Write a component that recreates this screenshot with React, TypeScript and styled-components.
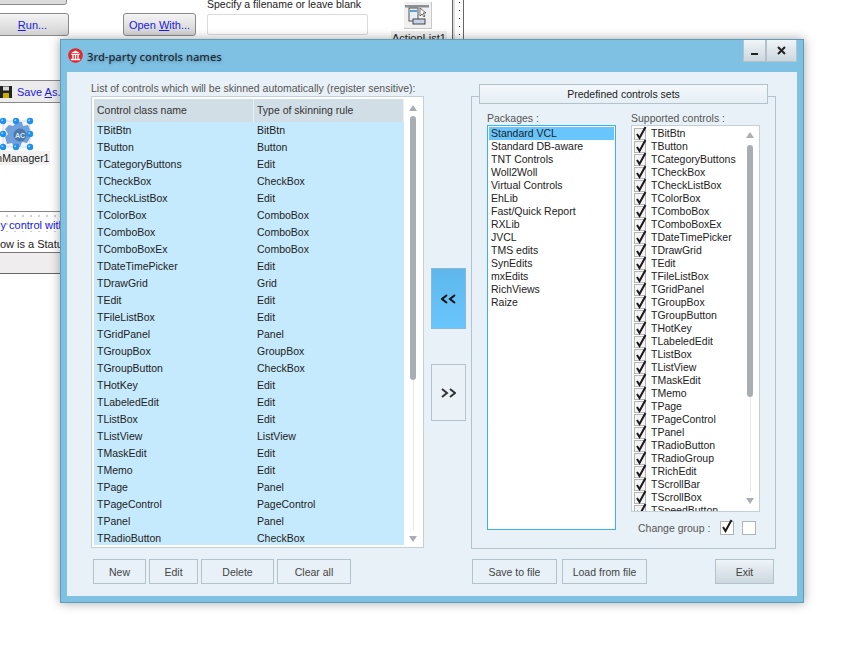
import React from 'react';
import styled, { createGlobalStyle } from 'styled-components';

const GlobalStyle = createGlobalStyle`
  html, body {
    margin: 0;
    padding: 0;
    background: #fff;
  }
  body {
    font-family: 'Liberation Sans', Arial, sans-serif;
    font-size: 10.5px;
    color: #222;
  }
`;

const Desktop = styled.div`
  position: relative;
  width: 858px;
  height: 646px;
  overflow: hidden;
  background: #fff;
`;

/* things left of / behind the dialog, on the form designer canvas */
const DesignerButton = styled.div<{ $left: number; $width: number }>`
  position: absolute;
  left: ${(p) => p.$left}px;
  top: 13px;
  width: ${(p) => p.$width}px;
  height: 23px;
  box-sizing: border-box;
  display: flex;
  align-items: center;
  justify-content: center;
  border: 1px solid #8a8a8a;
  border-radius: 3px;
  background: linear-gradient(#f4f4f4, #d2d2d2);
  color: #1a1ae0;
  font-size: 11px;
`;

const TopStub = styled.div`
  position: absolute;
  left: -4px;
  top: -10px;
  width: 71px;
  height: 15px;
  box-sizing: border-box;
  border: 1px solid #8a8a8a;
  border-radius: 3px;
  background: #dcdcdc;
`;

const FilenameLabel = styled.div`
  position: absolute;
  left: 207px;
  top: -3px;
  font-size: 10.5px;
  line-height: 15px;
  color: #222;
`;

const FilenameInput = styled.div`
  position: absolute;
  left: 207px;
  top: 14px;
  width: 161px;
  height: 21px;
  box-sizing: border-box;
  border: 1px solid #dadada;
  border-radius: 2px;
`;

const ActionIcon = styled.div`
  position: absolute;
  left: 404px;
  top: 2px;
  width: 28px;
  height: 27px;
  box-sizing: border-box;
  border-right: 1px solid #c8c8c8;
  border-bottom: 1px solid #c8c8c8;
  background: #f0f0f0;
`;

const ActionLabel = styled.div`
  position: absolute;
  left: 391px;
  top: 31px;
  padding: 0 1px;
  background: #eee;
  font-size: 11px;
  line-height: 15px;
`;

const VerticalRule = styled.div<{ $left: number; $width: number }>`
  position: absolute;
  left: ${(p) => p.$left}px;
  top: 0;
  width: ${(p) => p.$width}px;
  height: 40px;
  box-sizing: border-box;
  border-left: 1px solid #666;
  background: #ddd;
`;

const DotColumn = styled.div`
  position: absolute;
  left: 459px;
  top: 2px;
  width: 1px;
  height: 34px;
  background: repeating-linear-gradient(#222 0 1px, transparent 1px 8px);
`;

const SaveBar = styled.div`
  position: absolute;
  left: 0;
  top: 80px;
  width: 62px;
  height: 23px;
  box-sizing: border-box;
  display: flex;
  align-items: center;
  gap: 4px;
  border-top: 1px solid #888;
  border-bottom: 1px solid #888;
  background: #ececec;
  color: #1a1ae0;
  font-size: 11px;
  white-space: nowrap;
  overflow: hidden;
`;

const ManagerIcon = styled.div`
  position: absolute;
  left: 0;
  top: 117px;
  width: 35px;
  height: 35px;
`;

const ManagerLabel = styled.div`
  position: absolute;
  left: -27px;
  top: 151px;
  padding-right: 1px;
  background: #f2f2f2;
  font-size: 10.5px;
  line-height: 14px;
`;

const StatusStrip = styled.div`
  position: absolute;
  left: 0;
  top: 211px;
  width: 62px;
  height: 63px;
  box-sizing: border-box;
  border-top: 1px solid #888;
  border-bottom: 1px solid #666;
  background: #efeded;
  overflow: hidden;
  white-space: nowrap;
`;

const StatusLink = styled.div`
  height: 20px;
  margin-left: -13px;
  background-color: #fff;
  background-image: radial-gradient(#999 0.6px, transparent 0.8px);
  background-size: 8px 8px;
  color: #1a1ae0;
  font-size: 11px;
  line-height: 26px;
`;

const StatusText = styled.div`
  height: 20px;
  margin-left: -16px;
  border-bottom: 1px solid #777;
  background: #fff;
  font-size: 11px;
  line-height: 24px;
`;

/* the dialog */
const Dialog = styled.div`
  position: absolute;
  left: 60px;
  top: 39px;
  width: 744px;
  height: 564px;
  box-sizing: border-box;
  display: flex;
  flex-direction: column;
  padding: 0 6px 6px;
  border: 1px solid #5f9cba;
  background: #7fc1e3;
  box-shadow: 0 0 10px rgba(0, 0, 0, 0.35);
`;

const TitleBar = styled.div`
  height: 32px;
  flex: none;
  display: flex;
  align-items: flex-start;
  gap: 4px;
`;

const TitleIcon = styled.svg`
  margin-top: 8px;
  margin-left: 1px;
  width: 15px;
  height: 15px;
`;

const TitleText = styled.div`
  margin-top: 8px;
  font-family: 'Noto Sans', sans-serif;
  font-size: 11.2px;
  line-height: 17px;
  font-weight: 500;
  color: #1f2d38;
  text-shadow: 0 1px 3px rgba(40, 70, 90, 0.45);
`;

const WindowButtons = styled.div`
  margin-left: auto;
  display: flex;
`;

const WindowButton = styled.div<{ $width: number }>`
  width: ${(p) => p.$width}px;
  height: 22px;
  box-sizing: border-box;
  display: flex;
  align-items: center;
  justify-content: center;
  border: 1px solid #b3c3cc;
  border-top: none;
  background: linear-gradient(#f0f5f8, #ccd7de);
`;

const Client = styled.div`
  flex: 1;
  display: flex;
  padding: 10px 0 0 24px;
  background: #e8f1f7;
`;

const LeftColumn = styled.div`
  width: 333px;
  display: flex;
  flex-direction: column;
`;

const Caption = styled.div`
  height: 14px;
  font-size: 10.5px;
  line-height: 13px;
  color: #555;
  white-space: nowrap;
`;

const GridBox = styled.div`
  height: 452px;
  box-sizing: border-box;
  display: flex;
  padding: 2px 0 2px 2px;
  border: 1px solid #c3d0d8;
  background: #fff;
`;

const GridBody = styled.div`
  width: 310px;
  overflow: hidden;
  background: #c6eafd;
`;

const GridRow = styled.div`
  display: grid;
  grid-template-columns: 160px 150px;
  height: 17px;
  align-items: center;
  font-size: 10.5px;
  line-height: 17px;
  white-space: nowrap;
  color: #222;
`;

const GridCell = styled.div`
  padding-left: 3px;
`;

const GridHeader = styled.div`
  display: grid;
  grid-template-columns: 160px 150px;
  height: 23px;
  background: #d1dee6;
  font-size: 10.5px;
  line-height: 23px;
  color: #333;
`;

const HeaderCell = styled.div`
  padding-left: 3px;
  border-right: 1px solid #e8f1f7;
`;

const GridScroll = styled.div`
  flex: 1;
  position: relative;
`;

const ArrowUp = styled.div<{ $top: number; $left: number }>`
  position: absolute;
  top: ${(p) => p.$top}px;
  left: ${(p) => p.$left}px;
  border-left: 4px solid transparent;
  border-right: 4px solid transparent;
  border-bottom: 6px solid #a8afb3;
`;

const ArrowDown = styled.div<{ $top: number; $left: number }>`
  position: absolute;
  top: ${(p) => p.$top}px;
  left: ${(p) => p.$left}px;
  border-left: 4px solid transparent;
  border-right: 4px solid transparent;
  border-top: 6px solid #a8afb3;
`;

const Thumb = styled.div<{ $top: number; $left: number; $height: number }>`
  position: absolute;
  top: ${(p) => p.$top}px;
  left: ${(p) => p.$left}px;
  width: 6px;
  height: ${(p) => p.$height}px;
  border-radius: 3px;
  background: #a8afb3;
`;

const Track = styled.div<{ $top: number; $left: number; $height: number }>`
  position: absolute;
  top: ${(p) => p.$top}px;
  left: ${(p) => p.$left}px;
  width: 1px;
  height: ${(p) => p.$height}px;
  background: #e4e8ea;
`;

const ButtonRow = styled.div`
  display: flex;
  gap: 3px;
  margin-top: 11px;
  padding-left: 2px;
`;

const FlatButton = styled.div<{ $width: number; $raised?: boolean }>`
  width: ${(p) => p.$width}px;
  height: 25px;
  box-sizing: border-box;
  display: flex;
  align-items: center;
  justify-content: center;
  border: 1px solid #b3c3cc;
  background: ${(p) => (p.$raised ? 'linear-gradient(#eef4f8, #ccd7df)' : '#e8f1f7')};
  font-size: 10.5px;
  color: #444;
`;

const MiddleColumn = styled.div`
  width: 35px;
  margin-left: 7px;
  padding-top: 186px;
  display: flex;
  flex-direction: column;
  gap: 35px;
`;

const ArrowButton = styled.div<{ $active?: boolean; $height: number }>`
  height: ${(p) => p.$height}px;
  box-sizing: border-box;
  display: flex;
  align-items: center;
  justify-content: center;
  border: 1px solid ${(p) => (p.$active ? '#8bb9d6' : '#b3c3cc')};
  background: ${(p) => (p.$active ? 'linear-gradient(#5db7ec, #69c6fd)' : '#eaf2f7')};
`;

const RightColumn = styled.div`
  width: 305px;
  margin-left: 5px;
  display: flex;
  flex-direction: column;
  padding-top: 2px;
`;

const SetsTitle = styled.div`
  position: relative;
  z-index: 1;
  height: 20px;
  margin: 0 8px;
  box-sizing: border-box;
  display: flex;
  align-items: center;
  justify-content: center;
  border: 1px solid #b3c3cc;
  background: linear-gradient(#f2f7fa, #e6eff5);
  font-size: 10.5px;
  color: #222;
`;

const GroupFrame = styled.div`
  height: 453px;
  margin-top: -8px;
  box-sizing: border-box;
  display: flex;
  gap: 15px;
  padding: 15px 15px 0;
  border: 1px solid #b3c3cc;
`;

const GroupColumn = styled.div`
  width: 129px;
  display: flex;
  flex-direction: column;
`;

const GroupLabel = styled.div`
  height: 13px;
  font-size: 10.5px;
  line-height: 13px;
  color: #555;
  white-space: nowrap;
`;

const PackageList = styled.div`
  height: 405px;
  box-sizing: border-box;
  padding: 1px;
  border: 1px solid #3cb1ee;
  background: #fff;
`;

const PackageItem = styled.div<{ $selected?: boolean }>`
  height: 13px;
  padding-left: 2px;
  font-size: 10.5px;
  line-height: 13px;
  white-space: nowrap;
  color: #222;
  background: ${(p) => (p.$selected ? '#68c6fd' : 'transparent')};
`;

const CheckListBox = styled.div`
  position: relative;
  height: 387px;
  box-sizing: border-box;
  padding: 1px 0 0 2px;
  overflow: hidden;
  border: 1px solid #c3d0d8;
  background: #fff;
`;

const CheckRow = styled.div`
  display: flex;
  align-items: center;
  gap: 5px;
  height: 13px;
  font-size: 10.5px;
  line-height: 13px;
  white-space: nowrap;
  color: #222;
`;

const CheckBoxMark = styled.div<{ $size: number }>`
  position: relative;
  width: ${(p) => p.$size}px;
  height: ${(p) => p.$size}px;
  box-sizing: border-box;
  flex: none;
  border: 1px solid #b4b4b4;
  background: ${(p) => (p.$size > 12 ? '#fff' : '#f4f4f4')};
`;

const CheckGlyph = styled.svg`
  position: absolute;
  left: 0;
  top: -3px;
  width: 12px;
  height: 14px;
`;

const ChangeGroup = styled.div`
  display: flex;
  align-items: center;
  margin-top: 9px;
  margin-left: 7px;
  font-size: 10.5px;
  color: #555;
  white-space: nowrap;
`;

const ChangeText = styled.div`
  width: 82px;
`;

const ChangeGap = styled.div`
  width: 8px;
`;

const FooterRow = styled.div`
  display: flex;
  gap: 5px;
  margin-top: 10px;
  padding: 0 2px 0 1px;
`;

const ExitSlot = styled.div`
  margin-left: auto;
`;

const rules: [string, string][] = [
  ['TBitBtn', 'BitBtn'],
  ['TButton', 'Button'],
  ['TCategoryButtons', 'Edit'],
  ['TCheckBox', 'CheckBox'],
  ['TCheckListBox', 'Edit'],
  ['TColorBox', 'ComboBox'],
  ['TComboBox', 'ComboBox'],
  ['TComboBoxEx', 'ComboBox'],
  ['TDateTimePicker', 'Edit'],
  ['TDrawGrid', 'Grid'],
  ['TEdit', 'Edit'],
  ['TFileListBox', 'Edit'],
  ['TGridPanel', 'Panel'],
  ['TGroupBox', 'GroupBox'],
  ['TGroupButton', 'CheckBox'],
  ['THotKey', 'Edit'],
  ['TLabeledEdit', 'Edit'],
  ['TListBox', 'Edit'],
  ['TListView', 'ListView'],
  ['TMaskEdit', 'Edit'],
  ['TMemo', 'Edit'],
  ['TPage', 'Panel'],
  ['TPageControl', 'PageControl'],
  ['TPanel', 'Panel'],
  ['TRadioButton', 'CheckBox'],
];

const packages = [
  'Standard VCL',
  'Standard DB-aware',
  'TNT Controls',
  'Woll2Woll',
  'Virtual Controls',
  'EhLib',
  'Fast/Quick Report',
  'RXLib',
  'JVCL',
  'TMS edits',
  'SynEdits',
  'mxEdits',
  'RichViews',
  'Raize',
];

const supported = [
  'TBitBtn',
  'TButton',
  'TCategoryButtons',
  'TCheckBox',
  'TCheckListBox',
  'TColorBox',
  'TComboBox',
  'TComboBoxEx',
  'TDateTimePicker',
  'TDrawGrid',
  'TEdit',
  'TFileListBox',
  'TGridPanel',
  'TGroupBox',
  'TGroupButton',
  'THotKey',
  'TLabeledEdit',
  'TListBox',
  'TListView',
  'TMaskEdit',
  'TMemo',
  'TPage',
  'TPageControl',
  'TPanel',
  'TRadioButton',
  'TRadioGroup',
  'TRichEdit',
  'TScrollBar',
  'TScrollBox',
  'TSpeedButton',
];

function Check() {
  return (
    <CheckGlyph viewBox="0 0 12 14">
      <path d="M2 8 L4.5 12 L10.5 1" fill="none" stroke="#1a1a1a" strokeWidth="2" />
    </CheckGlyph>
  );
}

function Chevrons({ dir }: { dir: 'left' | 'right' }) {
  const d =
    dir === 'left'
      ? 'M6 1 L1 5 L6 9 M14 1 L9 5 L14 9'
      : 'M1 1 L6 5 L1 9 M9 1 L14 5 L9 9';
  return (
    <svg width="15" height="10" viewBox="0 0 15 10">
      <path d={d} fill="none" stroke={dir === 'left' ? '#111' : '#333'} strokeWidth="2" />
    </svg>
  );
}

function ManagerGlyph() {
  const handles = [
    [3, 4],
    [16, 4],
    [30, 4],
    [3, 17],
    [30, 17],
    [3, 30],
    [16, 30],
    [30, 30],
  ];
  return (
    <ManagerIcon>
      <svg width="35" height="35" viewBox="0 0 35 35">
        <rect x="3" y="4" width="27" height="26" fill="#f4f4f8" stroke="#b9c4d2" strokeWidth="0.6" />
        <path
          d="M17 5 L22 5 L23 9 L28 8 L30 13 L27 16 L30 21 L27 26 L22 25 L20 30 L14 30 L12 26 L7 27 L5 20 L8 17 L5 12 L9 8 L13 9 Z"
          fill="#6f9fdc"
        />
        <circle cx="20" cy="18" r="6.5" fill="#4a78a8" />
        <text x="20" y="20.5" textAnchor="middle" fontSize="7" fontWeight="bold" fill="#dbe8f5">
          AC
        </text>
        {handles.map(([x, y]) => (
          <g key={`${x}-${y}`}>
            <circle cx={x} cy={y} r="3.2" fill="#1e90f0" />
            <circle cx={x - 0.8} cy={y - 0.8} r="1" fill="#8fd0ff" />
          </g>
        ))}
      </svg>
    </ManagerIcon>
  );
}

export default function App() {
  return (
    <Desktop>
      <GlobalStyle />
      <TopStub />
      <DesignerButton $left={-4} $width={73}>
        <span>
          <u>R</u>un...
        </span>
      </DesignerButton>
      <DesignerButton $left={123} $width={73}>
        <span>
          Open <u>W</u>ith...
        </span>
      </DesignerButton>
      <FilenameLabel>Specify a filename or leave blank</FilenameLabel>
      <FilenameInput />
      <ActionIcon>
        <svg width="26" height="25" viewBox="0 0 26 25">
          <rect x="1" y="3" width="24" height="2.5" fill="#8a8f94" />
          <rect x="5" y="6" width="9" height="13" fill="#e8eef4" stroke="#555" />
          <rect x="6" y="8" width="7" height="2" fill="#5d9fd8" />
          <path d="M16 6 L16 14 L18 12 L20 15 L21 14 L19 11 L22 11 Z" fill="#fff" stroke="#333" strokeWidth="0.7" />
          <rect x="9" y="17" width="12" height="5" fill="#c7d3ea" stroke="#444" />
        </svg>
      </ActionIcon>
      <ActionLabel>ActionList1</ActionLabel>
      <VerticalRule $left={452} $width={3} />
      <DotColumn />
      <VerticalRule $left={463} $width={1} />
      <SaveBar>
        <svg width="13" height="14" viewBox="0 0 13 14" style={{ flex: 'none' }}>
          <rect x="0" y="1" width="12" height="12" fill="#222" />
          <rect x="3" y="1.5" width="6" height="4" fill="#d8d8d8" />
          <rect x="3" y="8" width="6" height="5" fill="#c7b000" />
        </svg>
        <span>
          Save <u>A</u>s...
        </span>
      </SaveBar>
      <ManagerGlyph />
      <ManagerLabel>ActionManager1</ManagerLabel>
      <StatusStrip>
        <StatusLink>Any control with</StatusLink>
        <StatusText>Below is a Status</StatusText>
      </StatusStrip>

      <Dialog>
        <TitleBar>
          <TitleIcon viewBox="0 0 16 16">
            <circle cx="8" cy="8" r="7.8" fill="#e0282e" />
            <path d="M3 5.6 L8 2.6 L13 5.6 Z M3.6 6.4 H12.4 V7.4 H3.6 Z M3 11.4 H13 V13 H3 Z" fill="#fff" />
            <path d="M4.6 7.4 H6 V11.4 H4.6 Z M7.3 7.4 H8.7 V11.4 H7.3 Z M10 7.4 H11.4 V11.4 H10 Z" fill="#fff" />
          </TitleIcon>
          <TitleText>3rd-party controls names</TitleText>
          <WindowButtons>
            <WindowButton $width={23}>
              <svg width="9" height="9" viewBox="0 0 9 9">
                <rect x="1" y="7" width="7" height="2" fill="#222" />
              </svg>
            </WindowButton>
            <WindowButton $width={31}>
              <svg width="9" height="9" viewBox="0 0 9 9">
                <path d="M1 1 L8 8 M8 1 L1 8" stroke="#222" strokeWidth="2" />
              </svg>
            </WindowButton>
          </WindowButtons>
        </TitleBar>

        <Client>
          <LeftColumn>
            <Caption>List of controls which will be skinned automatically (register sensitive):</Caption>
            <GridBox>
              <GridBody>
                <GridHeader>
                  <HeaderCell>Control class name</HeaderCell>
                  <HeaderCell>Type of skinning rule</HeaderCell>
                </GridHeader>
                {rules.map(([name, rule]) => (
                  <GridRow key={name}>
                    <GridCell>{name}</GridCell>
                    <GridCell>{rule}</GridCell>
                  </GridRow>
                ))}
              </GridBody>
              <GridScroll>
                <ArrowUp $top={6} $left={5} />
                <Thumb $top={17} $left={6} $height={264} />
                <Track $top={281} $left={9} $height={150} />
                <ArrowDown $top={437} $left={5} />
              </GridScroll>
            </GridBox>
            <ButtonRow>
              <FlatButton $width={53}>New</FlatButton>
              <FlatButton $width={49}>Edit</FlatButton>
              <FlatButton $width={73}>Delete</FlatButton>
              <FlatButton $width={74}>Clear all</FlatButton>
            </ButtonRow>
          </LeftColumn>

          <MiddleColumn>
            <ArrowButton $active $height={61}>
              <Chevrons dir="left" />
            </ArrowButton>
            <ArrowButton $height={57}>
              <Chevrons dir="right" />
            </ArrowButton>
          </MiddleColumn>

          <RightColumn>
            <SetsTitle>Predefined controls sets</SetsTitle>
            <GroupFrame>
              <GroupColumn>
                <GroupLabel>Packages :</GroupLabel>
                <PackageList>
                  {packages.map((name, i) => (
                    <PackageItem key={name} $selected={i === 0}>
                      {name}
                    </PackageItem>
                  ))}
                </PackageList>
              </GroupColumn>
              <GroupColumn>
                <GroupLabel>Supported controls :</GroupLabel>
                <CheckListBox>
                  {supported.map((name) => (
                    <CheckRow key={name}>
                      <CheckBoxMark $size={12}>
                        <Check />
                      </CheckBoxMark>
                      {name}
                    </CheckRow>
                  ))}
                  <ArrowUp $top={6} $left={114} />
                  <Thumb $top={19} $left={115} $height={252} />
                  <Track $top={271} $left={118} $height={95} />
                  <ArrowDown $top={372} $left={114} />
                </CheckListBox>
                <ChangeGroup>
                  <ChangeText>Change group :</ChangeText>
                  <CheckBoxMark $size={14}>
                    <Check />
                  </CheckBoxMark>
                  <ChangeGap />
                  <CheckBoxMark $size={14} />
                </ChangeGroup>
              </GroupColumn>
            </GroupFrame>
            <FooterRow>
              <FlatButton $width={85}>Save to file</FlatButton>
              <FlatButton $width={85}>Load from file</FlatButton>
              <ExitSlot>
                <FlatButton $width={59} $raised>Exit</FlatButton>
              </ExitSlot>
            </FooterRow>
          </RightColumn>
        </Client>
      </Dialog>
    </Desktop>
  );
}
